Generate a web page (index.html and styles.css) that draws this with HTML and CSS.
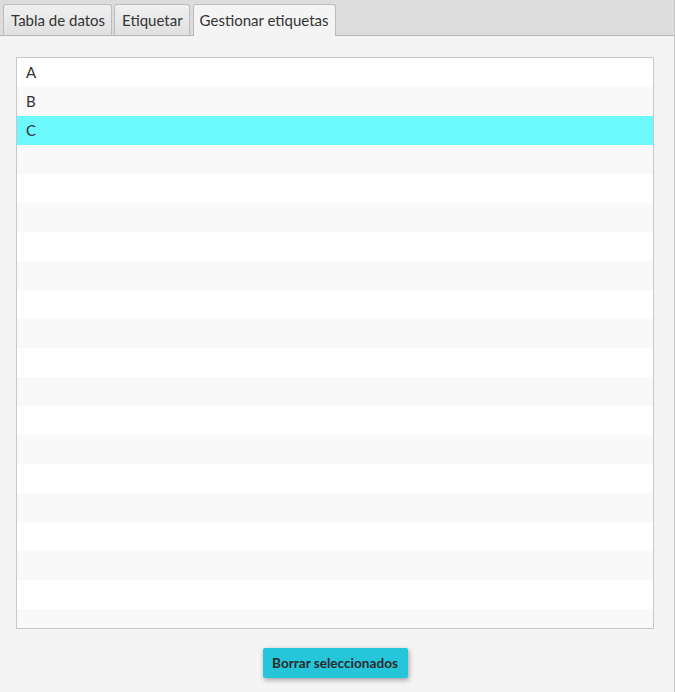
FILE: index.html
```html
<!DOCTYPE html>
<html lang="es">
<head>
<meta charset="utf-8">
<title>Gestionar etiquetas</title>
<link rel="stylesheet" href="styles.css">
</head>
<body>
<div class="app">
  <div class="tabbar">
    <div class="tab">Tabla de datos</div>
    <div class="tab">Etiquetar</div>
    <div class="tab selected">Gestionar etiquetas</div>
  </div>
  <div class="content">
    <div class="list">
      <div class="row">A</div>
      <div class="row">B</div>
      <div class="row sel">C</div>
      <div class="row"></div><div class="row"></div><div class="row"></div><div class="row"></div>
      <div class="row"></div><div class="row"></div><div class="row"></div><div class="row"></div>
      <div class="row"></div><div class="row"></div><div class="row"></div><div class="row"></div>
      <div class="row"></div><div class="row"></div><div class="row"></div><div class="row"></div>
      <div class="row"></div>
    </div>
    <div class="actions">
      <button class="btn">Borrar seleccionados</button>
    </div>
  </div>
</div>
</body>
</html>
```
FILE: styles.css
```css
html, body {
  margin: 0;
  padding: 0;
  background: #f4f4f4;
}
.app {
  width: 674px;
  height: 692px;
  border-right: 1px solid #c4c4c4;
  background: #f4f4f4;
  font-family: Lato, "Open Sans", sans-serif;
  color: #333;
  display: flex;
  flex-direction: column;
  overflow: hidden;
}
.tabbar {
  height: 35px;
  background: #dcdcdc;
  border-bottom: 1px solid #b4b4b4;
  display: flex;
  align-items: flex-end;
  gap: 2px;
  padding-left: 3px;
  flex: none;
}
.tab {
  height: 30px;
  box-sizing: content-box;
  padding: 0 6px 0 7px;
  border: 1px solid #bcbcbc;
  border-bottom: none;
  border-radius: 3px 3px 0 0;
  background: linear-gradient(#f0f0f0, #e0e0e0);
  font-size: 15px;
  line-height: 30px;
  color: #333;
  white-space: nowrap;
}
.tab.selected {
  background: #f4f4f4;
  margin-bottom: -1px;
  height: 31px;
  margin-left: 1px;
  padding: 0 6px;
}
.content {
  flex: 1;
  display: flex;
  flex-direction: column;
  padding: 21px 20px 0 16px;
}
.list {
  height: 570px;
  border: 1px solid #c8c8c8;
  background: #fff;
  overflow: hidden;
  flex: none;
}
.row {
  height: 29px;
  line-height: 29px;
  padding-left: 9px;
  font-size: 15px;
  color: #333;
}
.row:nth-child(even) {
  background: #f9f9f9;
}
.row.sel {
  background: #6cf9fe;
}
.actions {
  display: flex;
  justify-content: center;
  padding-top: 19px;
}
.btn {
  width: 145px;
  height: 30px;
  border: none;
  border-radius: 2px;
  background: #26c6da;
  color: #2a2a2a;
  font-family: Lato, "Open Sans", sans-serif;
  font-weight: bold;
  font-size: 13.6px;
  box-shadow: 1px 2px 5px rgba(0,0,0,0.35);
  padding: 0;
}
```
